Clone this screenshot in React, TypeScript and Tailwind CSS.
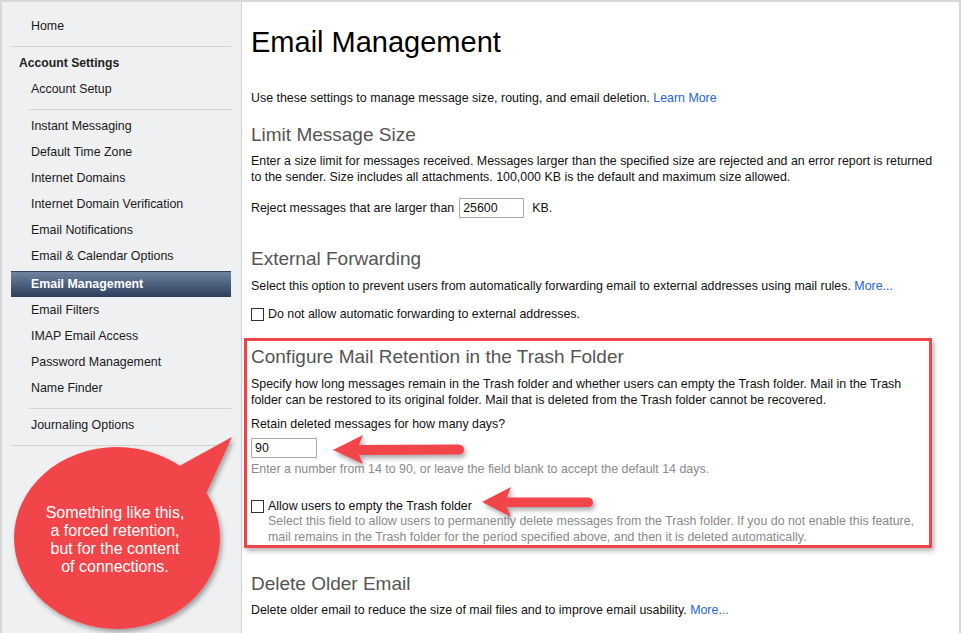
const navGroups = [
  ["Instant Messaging", "Default Time Zone", "Internet Domains", "Internet Domain Verification", "Email Notifications", "Email & Calendar Options"],
  ["Email Filters", "IMAP Email Access", "Password Management", "Name Finder"],
];

const NavItem = ({ label }: { label: string }) => (
  <div className="h-[26px] flex items-center pl-[20px] text-[12.4px] text-[#1a1a1a]">{label}</div>
);

const Checkbox = () => <span className="w-[13px] h-[13px] border border-[#333] bg-white shrink-0" />;

const Sidebar = () => {
  return (
    <aside className="w-[240px] shrink-0 bg-[#eff0f2] border-r border-[#cfcfcf] pl-[9px] pt-[11px]">
      <NavItem label="Home" />
      <div className="mt-[7px] w-[220px] h-px bg-[#d4d4d4]" />
      <div className="mt-[3px] h-[26px] flex items-center pl-[8px] text-[12.2px] font-bold text-[#222]">
        Account Settings
      </div>
      <NavItem label="Account Setup" />
      <div className="mt-[7px] ml-[18px] w-[202px] h-px bg-[#d4d4d4]" />
      <div className="mt-[3px]">
        {navGroups[0].map((l) => (
          <NavItem key={l} label={l} />
        ))}
      </div>
      <div className="mt-[2px] w-[220px] h-[26px] flex items-center pl-[20px] text-[12.4px] font-bold text-white bg-linear-to-b from-[#6f83a1] to-[#2c3e5c] border-t border-[#2f4262]">
        Email Management
      </div>
      {navGroups[1].map((l) => (
        <NavItem key={l} label={l} />
      ))}
      <div className="mt-[7px] ml-[18px] w-[202px] h-px bg-[#d4d4d4]" />
      <div className="mt-[3px]">
        <NavItem label="Journaling Options" />
      </div>
      <div className="mt-[7px] w-[220px] h-px bg-[#d4d4d4]" />
    </aside>
  );
};

const H2 = ({ children, className = "" }: { children: React.ReactNode; className?: string }) => (
  <h2 className={`text-[19px] leading-6 text-[#555] ${className}`}>{children}</h2>
);

const Link = ({ children }: { children: React.ReactNode }) => <span className="text-[#2a64d4]">{children}</span>;

export default function App() {
  return (
    <div className="relative w-[962px] h-[633px] bg-white overflow-hidden font-['Liberation_Sans',Arial,sans-serif]">
      <div className="flex w-[961px] h-[633px] border-t-2 border-l-2 border-r-2 border-[#d8d8d8]">
        <Sidebar />

        <main className="flex-1 pl-[9px] pt-[23px] text-[12.4px] leading-4 text-[#111] whitespace-nowrap">
          <h1 className="text-[29px] leading-[34px] text-black">Email Management</h1>

          <p className="mt-[31px]">
            Use these settings to manage message size, routing, and email deletion. <Link>Learn More</Link>
          </p>

          <H2 className="mt-[17px]">Limit Message Size</H2>
          <p className="mt-[6px]">
            Enter a size limit for messages received. Messages larger than the specified size are rejected and an error report is returned
            <br />
            to the sender. Size includes all attachments. 100,000 KB is the default and maximum size allowed.
          </p>
          <div className="mt-[13px] h-[20px] flex items-center">
            <span>Reject messages that are larger than</span>
            <span className="ml-[5px] w-[65px] h-[20px] border border-[#a9a9a9] flex items-center pl-[3px]">25600</span>
            <span className="ml-[8px]">KB.</span>
          </div>

          <H2 className="mt-[29px]">External Forwarding</H2>
          <p className="mt-[7px]">
            Select this option to prevent users from automatically forwarding email to external addresses using mail rules.{" "}
            <Link>More...</Link>
          </p>
          <div className="mt-[12px] h-[16px] flex items-center">
            <Checkbox />
            <span className="ml-[4px]">Do not allow automatic forwarding to external addresses.</span>
          </div>

          <section className="mt-[16px] ml-[-7px] w-[688px] border-[3px] border-[#f0444a] pl-[4px] pt-[4px] shadow-[2px_3px_5px_rgba(0,0,0,0.3)]">
            <H2>Configure Mail Retention in the Trash Folder</H2>
            <p className="mt-[7px]">
              Specify how long messages remain in the Trash folder and whether users can empty the Trash folder. Mail in the Trash
              <br />
              folder can be restored to its original folder. Mail that is deleted from the Trash folder cannot be recovered.
            </p>
            <p className="mt-[8px]">Retain deleted messages for how many days?</p>
            <div className="mt-[6px] w-[66px] h-[20px] border border-[#a9a9a9] flex items-center pl-[3px]">90</div>
            <p className="mt-[3px] text-[#8a8a8a]">
              Enter a number from 14 to 90, or leave the field blank to accept the default 14 days.
            </p>
            <div className="mt-[21px] h-[16px] flex items-center">
              <Checkbox />
              <span className="ml-[4px]">Allow users to empty the Trash folder</span>
            </div>
            <p className="pl-[17px] text-[#8a8a8a] leading-[15.5px]">
              Select this field to allow users to permanently delete messages from the Trash folder. If you do not enable this feature,
              <br />
              mail remains in the Trash folder for the period specified above, and then it is deleted automatically.
            </p>
          </section>

          <H2 className="mt-[24px]">Delete Older Email</H2>
          <p className="mt-[6px]">
            Delete older email to reduce the size of mail files and to improve email usability. <Link>More...</Link>
          </p>
        </main>
      </div>

      {/* annotations drawn over the page */}
      <svg className="absolute inset-0 pointer-events-none" width="962" height="633" viewBox="0 0 962 633">
        <defs>
          <filter id="sh" x="-20%" y="-20%" width="140%" height="150%">
            <feDropShadow dx="2" dy="3" stdDeviation="2.5" floodColor="#000" floodOpacity="0.35" />
          </filter>
        </defs>
        <g fill="#f2444a" filter="url(#sh)">
          <path d="M333,450 L363,435 L359,445 L458,444.5 Q464,445 464,449.5 Q464,454.5 458,454.5 L359,455 L363,464 Z" />
          <path d="M482,502 L511,487 L507,497.5 L588,497.5 Q593,498 593,502.5 Q593,507 588,507 L507,507 L511,517 Z" />
          <g>
            <ellipse cx="117" cy="538" rx="103" ry="91" />
            <polygon points="172,470 232,437 206,494" />
          </g>
        </g>
      </svg>
      <div className="absolute left-[15px] top-[504px] w-[200px] text-center text-white text-[16px] leading-[18px] font-['Liberation_Sans',Arial,sans-serif]">
        Something like this,
        <br />
        a forced retention,
        <br />
        but for the content
        <br />
        of connections.
      </div>
    </div>
  );
}
